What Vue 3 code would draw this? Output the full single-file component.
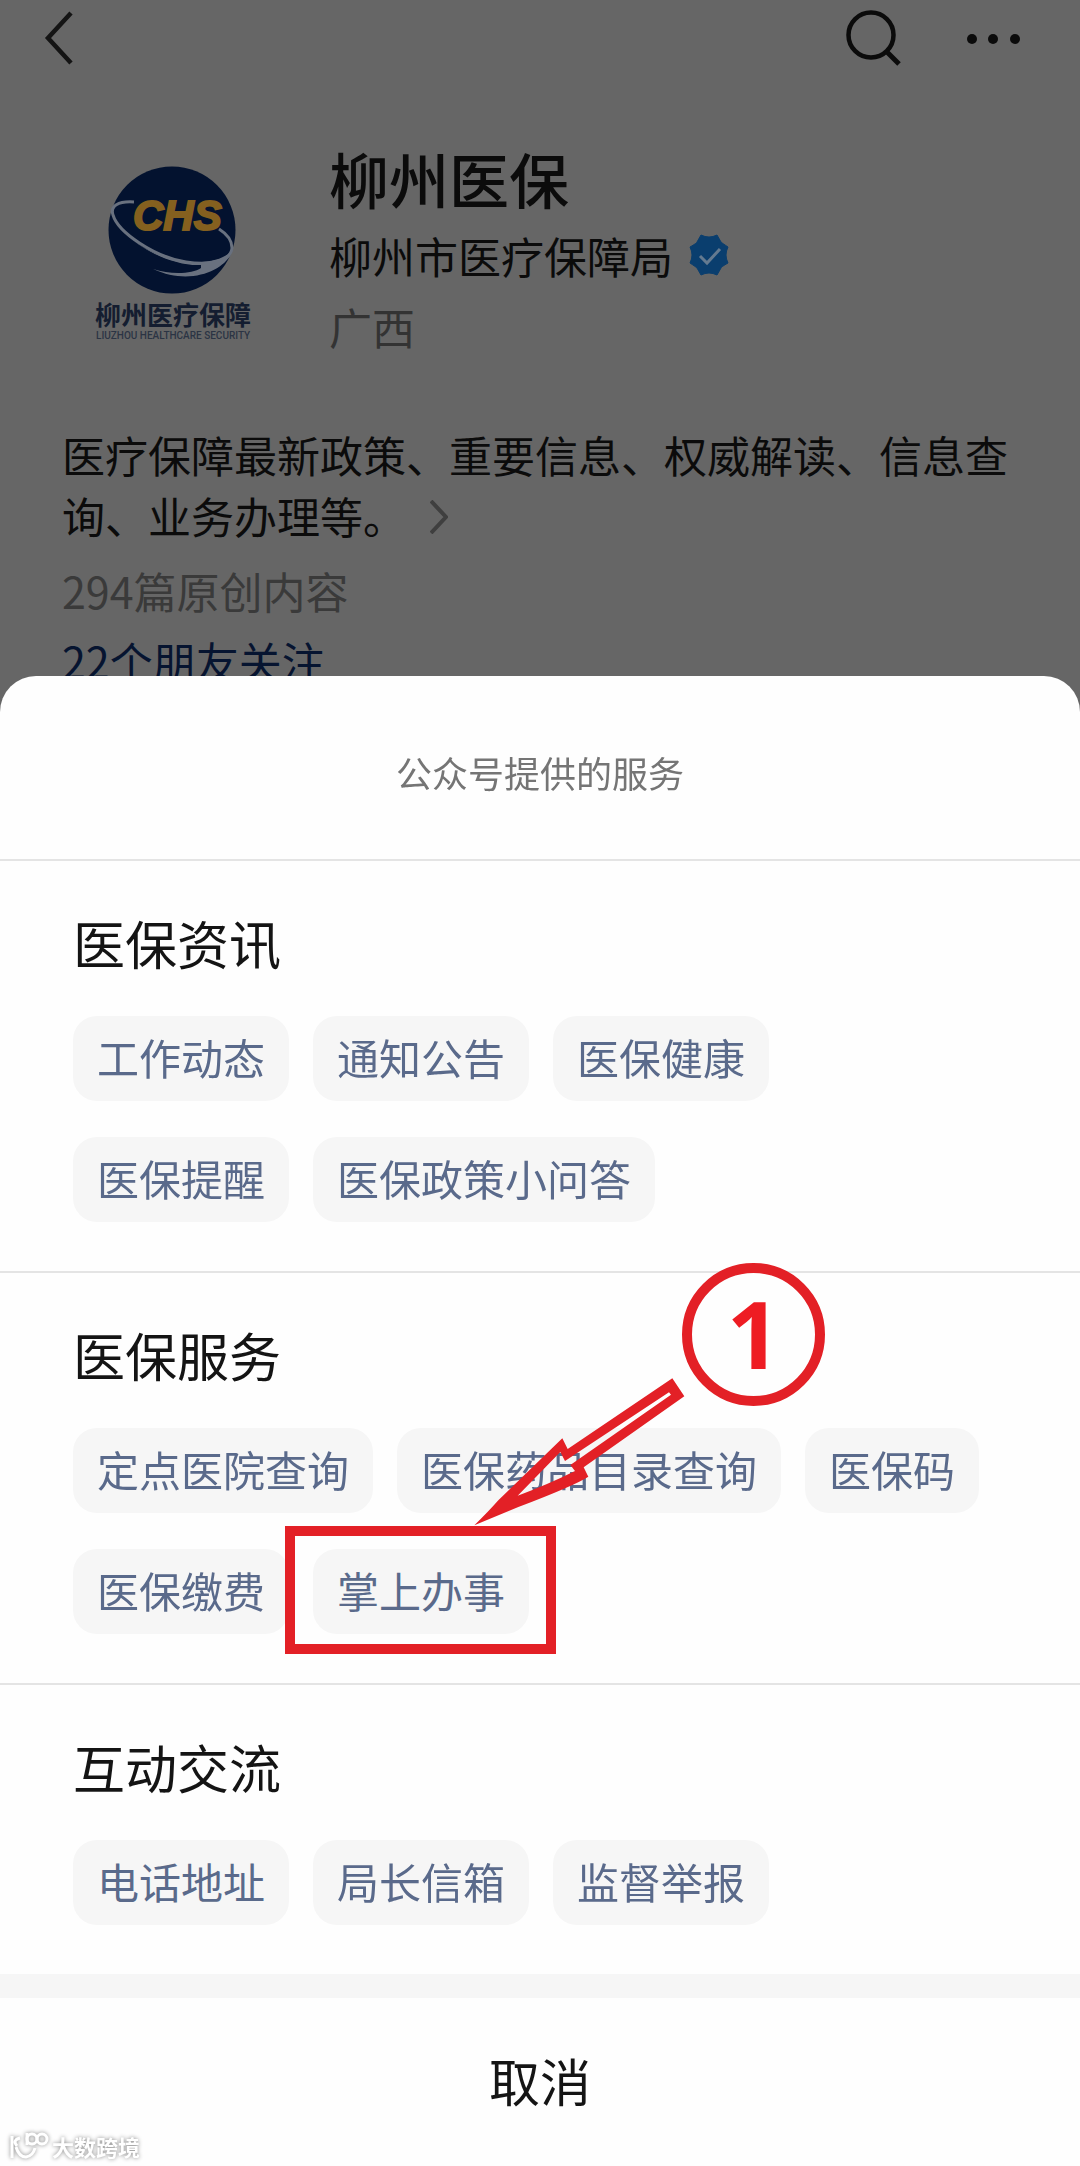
<script setup>
const sections = [
  {
    title: '医保资讯',
    items: ['工作动态', '通知公告', '医保健康', '医保提醒', '医保政策小问答'],
  },
  {
    title: '医保服务',
    items: ['定点医院查询', '医保药品目录查询', '医保码', '医保缴费', '掌上办事'],
  },
  {
    title: '互动交流',
    items: ['电话地址', '局长信箱', '监督举报'],
  },
]
const highlighted = '掌上办事'
</script>

<template>
  <div class="page">
    <header class="topbar">
      <button class="icon-button" type="button" aria-label="返回">
        <svg width="30" height="54" viewBox="0 0 30 54" fill="none" stroke="#141414" stroke-width="4.500">
          <path d="M27 2 4 27 27 52" />
        </svg>
      </button>
      <div class="actions">
        <button class="icon-button" type="button" aria-label="搜索">
          <svg width="58" height="58" viewBox="0 0 58 58" fill="none" stroke="#0b0b0b">
            <circle cx="27" cy="26" r="22.500" stroke-width="4.500" />
            <path d="M42 42 55 55" stroke-width="5" />
          </svg>
        </button>
        <button class="icon-button" type="button" aria-label="更多">
          <svg width="54" height="12" viewBox="0 0 54 12" fill="#0b0b0b">
            <circle cx="6" cy="7" r="5" />
            <circle cx="27" cy="7" r="5" />
            <circle cx="49" cy="7" r="5" />
          </svg>
        </button>
      </div>
    </header>

    <section class="profile">
      <svg class="logo" width="190" height="200" viewBox="0 0 190 200" role="img" aria-label="柳州医疗保障">
        <ellipse cx="92" cy="80" rx="63.500" ry="63.500" fill="#03122f" />
        <path
          d="M54 52C38 51 30 56 33 65C38 82 74 107 106 112C133 116 151 110 152 98C152 91 147 84 139 79"
          fill="none" stroke="#69717f" stroke-width="3"
        />
        <path d="M32 60C34 83 73 110 112 112C134 113 147 107 153 99C148 119 112 137 73 119C91 125 112 124 121 118L121 115C88 117 37 89 32 60Z" fill="#69717f" />
        <text class="logo-mark" x="53" y="80">CHS</text>
        <text class="logo-name" x="15" y="175">柳州医疗保障</text>
        <text class="logo-sub" x="16" y="189">LIUZHOU HEALTHCARE SECURITY</text>
      </svg>
      <div class="identity">
        <h1>柳州医保</h1>
        <div class="owner">
          <span>柳州市医疗保障局</span>
          <svg width="40" height="42" viewBox="-20 -21 40 42" aria-label="已认证">
            <path
              d="M-8-20Q0-16 8-20L12-13Q13-12 19-8Q15 0 19 8Q12 12 12 13L8 20Q0 16-8 20L-12 13Q-13 12-19 8Q-15 0-19-8Q-12-12-12-13Z"
              fill="#0a3e6e" stroke="#0a3e6e" stroke-width="1"
            />
            <path d="M-9 1-2 8 11-6" fill="none" stroke="#647a90" stroke-width="3" />
          </svg>
        </div>
        <div class="region">广西</div>
      </div>
    </section>

    <section class="about">
      <p class="intro">
        医疗保障最新政策、重要信息、权威解读、信息查询、业务办理等。<svg
          class="more" width="18" height="34" viewBox="0 0 18 34" fill="none" stroke="#3f3f3f" stroke-width="4"
        ><path d="M1 1 16 17 1 33" /></svg>
      </p>
      <p class="originals">294篇原创内容</p>
      <a class="friends" href="#friends">22个朋友关注</a>
    </section>

    <div class="overlay">
      <div class="sheet" role="dialog" aria-labelledby="sheet-title">
        <h2 id="sheet-title" class="sheet-title">公众号提供的服务</h2>
        <section v-for="section in sections" :key="section.title" class="group">
          <h3>{{ section.title }}</h3>
          <ul class="chips">
            <li v-for="item in section.items" :key="item">
              <button class="chip" type="button">{{ item }}</button>
              <div v-if="item === highlighted" class="callout">
                <div class="frame"></div>
                <svg class="arrow" width="230" height="165" viewBox="0 0 690 495">
                  <path
                    fill="#e32026" fill-rule="evenodd"
                    d="M622 22 658 76 356 289 370 317Q330 343 160 408L28 463Q70 422 100 388L292 202 308 234ZM158 374Q250 340 330 300L316 282 618 71 612 64 345 240 300 270 286 243Z"
                  />
                </svg>
                <div class="step">1</div>
              </div>
            </li>
          </ul>
        </section>
        <button class="cancel" type="button">取消</button>
      </div>
    </div>

    <div class="watermark">
      <svg width="42" height="32" viewBox="0 0 42 32" fill="none" stroke="#fff" stroke-width="3">
        <path d="M4 6V28M12 8Q4 10 9 16M8 17Q11 27 18 27Q25 26 27 18" />
        <path d="M19 3V15" />
        <circle cx="24" cy="9" r="5" />
        <circle cx="34" cy="9" r="5" />
      </svg>
      <span>大数跨境</span>
    </div>
  </div>
</template>

<style>
body {
  background: #666;
}
</style>

<style scoped>
.page {
  min-height: 100vh;
  background: #666;
  color: #0b0b0b;
  font-family: "Noto Sans CJK SC", "Noto Sans", sans-serif;
}

h1, h2, h3, p, ul {
  margin: 0;
  padding: 0;
  font-weight: 400;
}

button {
  margin: 0;
  padding: 0;
  border: 0;
  background: none;
  color: inherit;
  font: inherit;
}

svg {
  display: block;
}

.topbar {
  display: flex;
  align-items: center;
  justify-content: space-between;
  height: 76px;
  padding: 0 60px 0 44px;
}

.actions {
  display: flex;
  align-items: center;
  gap: 64px;
}

.profile {
  display: flex;
  align-items: flex-start;
  gap: 59px;
  padding: 66px 60px 0 80px;
}

.logo {
  flex: none;
  margin-top: 8px;
}

.logo-mark {
  fill: #84601f;
  stroke: #84601f;
  stroke-width: 2px;
  font: italic 700 42px "Liberation Sans", sans-serif;
}

.logo-name {
  fill: #141d30;
  font-size: 26px;
  font-weight: 700;
}

.logo-sub {
  fill: #2b3444;
  font: 500 10px "Roboto", sans-serif;
}

.identity {
  display: flex;
  flex-direction: column;
  gap: 11px;
}

h1 {
  font-size: 60px;
  font-weight: 500;
  line-height: 72px;
}

.owner {
  display: flex;
  align-items: center;
  gap: 16px;
}

.owner,
.region {
  font-size: 43px;
  line-height: 60px;
}

.region {
  color: #333;
}

.about {
  padding: 68px 62px 0;
  font-size: 43px;
  line-height: 60px;
}

.intro {
  line-height: 61px;
}

.more {
  display: inline-block;
  margin-left: 24px;
}

.originals {
  margin-top: 14px;
  color: #3a3a3a;
}

.friends {
  display: inline-block;
  margin-top: 10px;
  color: #061430;
  text-decoration: none;
}

.overlay {
  position: fixed;
  inset: 0;
  display: flex;
  align-items: flex-end;
}

.sheet {
  flex: 1;
  min-width: 0;
  overflow: hidden;
  border-radius: 36px 36px 0 0;
  background: #fefefe;
  color: #141414;
}

.sheet-title {
  padding: 68px 0 59px;
  color: #757575;
  font-size: 36px;
  line-height: 56px;
  text-align: center;
}

.group {
  padding: 44px 73px 49px;
  border-top: 2px solid #e4e4e4;
}

h3 {
  margin-bottom: 35px;
  font-size: 52px;
  line-height: 76px;
}

.chips {
  display: flex;
  flex-wrap: wrap;
  gap: 36px 24px;
  list-style: none;
}

.chips li {
  position: relative;
}

.chip {
  display: block;
  height: 85px;
  padding: 0 24px 4px;
  border-radius: 24px;
  background: #f6f6f6;
  color: #5a6a8b;
  font-size: 42px;
  white-space: nowrap;
}

.callout {
  position: absolute;
  inset: 0;
  pointer-events: none;
}

.frame {
  position: absolute;
  inset: -23px -27px -20px -28px;
  border: 10px solid #e32026;
}

.arrow {
  position: absolute;
  top: -178px;
  left: 152px;
}

.step {
  position: absolute;
  top: -286px;
  left: 369px;
  box-sizing: border-box;
  width: 143px;
  height: 143px;
  border: 10px solid #e32026;
  border-radius: 50%;
  color: #ee1c23;
  font: 700 94px/120px "Open Sans", "Noto Sans", sans-serif;
  text-align: center;
}

.cancel {
  display: block;
  width: 100%;
  height: 192px;
  padding-bottom: 4px;
  border-top: 24px solid #f6f6f6;
  font-size: 51px;
}

.watermark {
  position: fixed;
  bottom: 4px;
  left: 8px;
  display: flex;
  align-items: center;
  gap: 2px;
  color: #fff;
  filter: drop-shadow(0 0 2px #888);
  font-size: 22px;
  font-weight: 700;
  line-height: 32px;
}
</style>
